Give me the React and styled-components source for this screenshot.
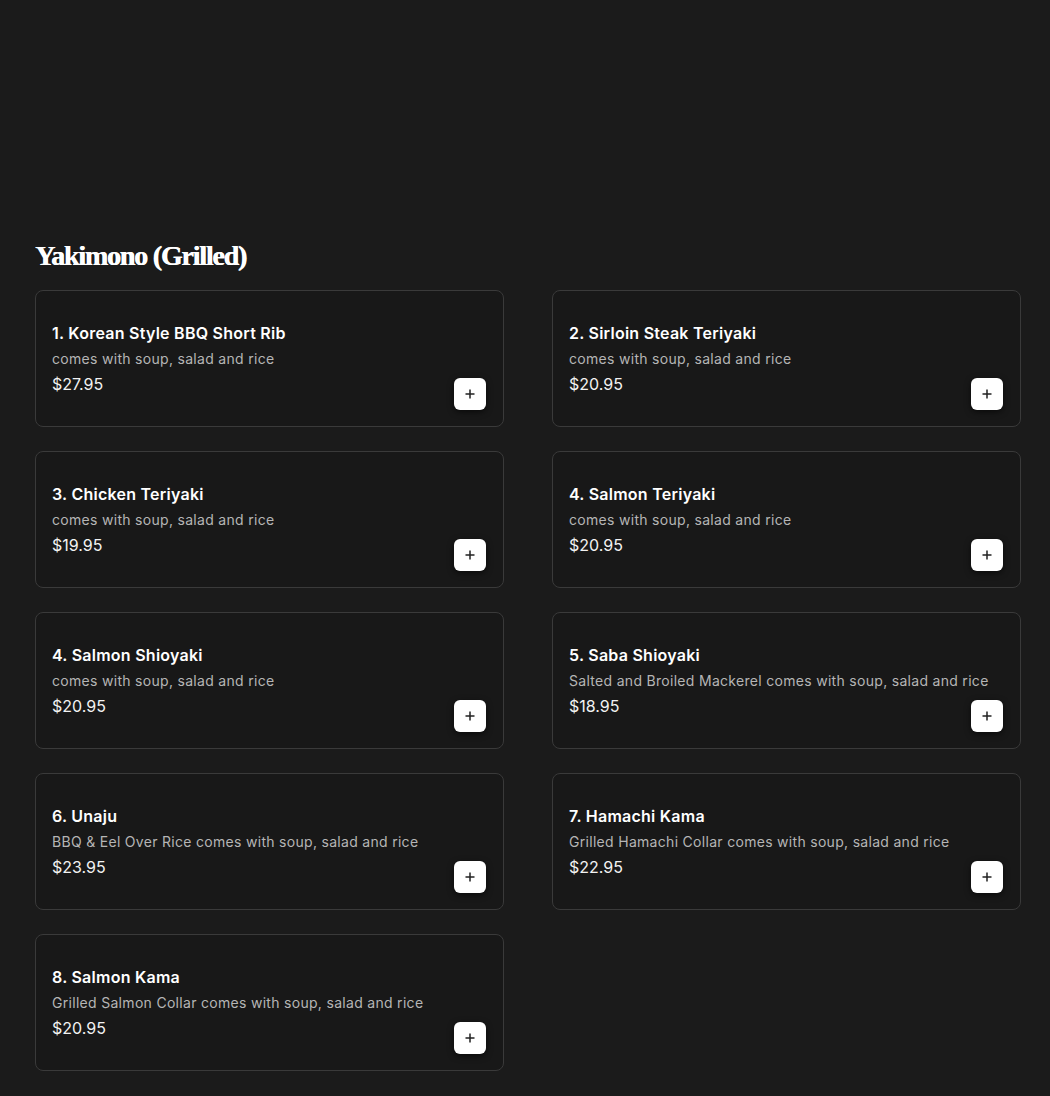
import React from "react";
import styled, {createGlobalStyle} from "styled-components";

const GlobalStyle = createGlobalStyle`
  html, body {
    margin: 0;
    padding: 0;
    background: #1b1b1b;
  }
  body {
    font-family: Inter, "Noto Sans", sans-serif;
    color: #fff;
  }
`;

const Page = styled.div`
  padding: 240px 0 24px 35px;
  min-height: 1096px;
  box-sizing: border-box;
`;

const SectionTitle = styled.h2`
  margin: 0 0 18px;
  font-family: "Liberation Serif", "DejaVu Serif", serif;
  font-weight: 700;
  font-size: 28px;
  line-height: 32px;
  letter-spacing: -1.2px;
  color: #fff;
  text-shadow: 0.6px 0 0 #fff;
`;

const Grid = styled.div`
  display: grid;
  grid-template-columns: 469px 469px;
  column-gap: 48px;
  row-gap: 24px;
`;

const Card = styled.div`
  box-sizing: border-box;
  height: 137px;
  border: 1px solid #3a3a3a;
  border-radius: 8px;
  background: #181818;
  padding: 16px;
  display: flex;
  align-items: flex-end;
  justify-content: space-between;
`;

const Info = styled.div`
  align-self: center;
  display: flex;
  flex-direction: column;
  min-width: 0;
`;

const Name = styled.div`
  font-size: 16px;
  font-weight: 600;
  line-height: 24px;
  letter-spacing: 0.25px;
`;

const Desc = styled.div`
  font-size: 14px;
  line-height: 24px;
  letter-spacing: 0.3px;
  color: #b5b5b5;
  margin-top: 2px;
  white-space: nowrap;
`;

const Price = styled.div`
  font-size: 16px;
  line-height: 26px;
  color: #f2f2f2;
`;

const AddButton = styled.button`
  flex: none;
  width: 32px;
  height: 32px;
  margin-right: 1px;
  border: none;
  border-radius: 6px;
  background: #fff;
  display: flex;
  align-items: center;
  justify-content: center;
  padding: 0;
  box-shadow: 0 2px 6px rgba(0, 0, 0, 0.6);
  cursor: pointer;
`;

const items = [
  {name: "1. Korean Style BBQ Short Rib", desc: "comes with soup, salad and rice", price: "$27.95"},
  {name: "2. Sirloin Steak Teriyaki", desc: "comes with soup, salad and rice", price: "$20.95"},
  {name: "3. Chicken Teriyaki", desc: "comes with soup, salad and rice", price: "$19.95"},
  {name: "4. Salmon Teriyaki", desc: "comes with soup, salad and rice", price: "$20.95"},
  {name: "4. Salmon Shioyaki", desc: "comes with soup, salad and rice", price: "$20.95"},
  {name: "5. Saba Shioyaki", desc: "Salted and Broiled Mackerel comes with soup, salad and rice", price: "$18.95"},
  {name: "6. Unaju", desc: "BBQ & Eel Over Rice comes with soup, salad and rice", price: "$23.95"},
  {name: "7. Hamachi Kama", desc: "Grilled Hamachi Collar comes with soup, salad and rice", price: "$22.95"},
  {name: "8. Salmon Kama", desc: "Grilled Salmon Collar comes with soup, salad and rice", price: "$20.95"},
];

function PlusIcon() {
  return (
    <svg width="12" height="12" viewBox="0 0 12 12">
      <path d="M6 1.5v9M1.5 6h9" stroke="#222" strokeWidth="1.5" fill="none" />
    </svg>
  );
}

export default function App() {
  return (
    <Page>
      <GlobalStyle />
      <SectionTitle>Yakimono (Grilled)</SectionTitle>
      <Grid>
        {items.map((item, i) => (
          <Card key={i}>
            <Info>
              <Name>{item.name}</Name>
              <Desc>{item.desc}</Desc>
              <Price>{item.price}</Price>
            </Info>
            <AddButton aria-label="Add">
              <PlusIcon />
            </AddButton>
          </Card>
        ))}
      </Grid>
    </Page>
  );
}
